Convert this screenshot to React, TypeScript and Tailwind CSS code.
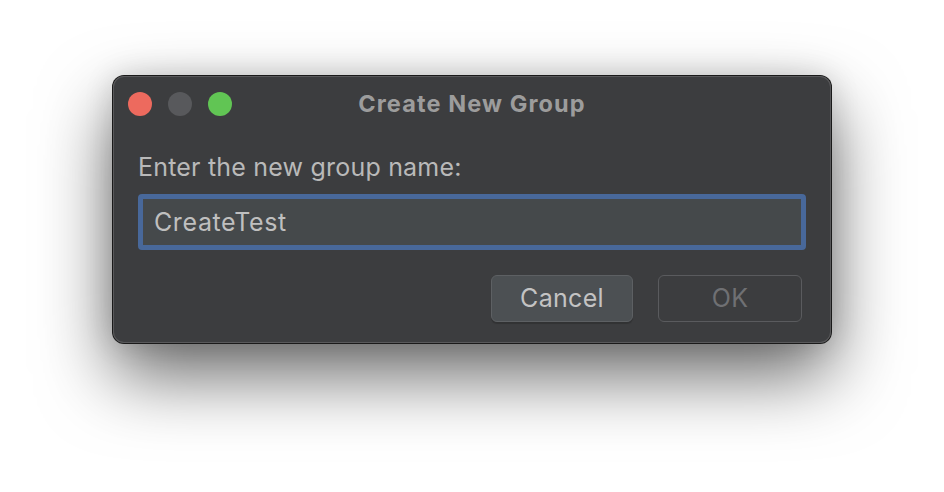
export default function App() {
  return (
    <div className="w-[944px] h-[492px] bg-white pt-[76px] pl-[113px] font-['Inter',sans-serif] overflow-hidden">
      <div className="w-[718px] h-[267px] rounded-[11px] bg-[#3c3d3f] flex flex-col shadow-[inset_0_0_0_1px_#59595b,0_0_0_1px_#1a1a1a,0_32px_72px_rgba(0,0,0,0.6),0_0_30px_rgba(0,0,0,0.14)]">
        <div className="h-[56px] shrink-0 grid grid-cols-[1fr_auto_1fr] items-center">
          <div className="flex items-center gap-[16px] pl-[15px]">
            <span className="w-[24px] h-[24px] rounded-full bg-[#ed6a5e]" />
            <span className="w-[24px] h-[24px] rounded-full bg-[#58595c]" />
            <span className="w-[24px] h-[24px] rounded-full bg-[#61c554]" />
          </div>
          <div className="text-[23.5px] font-bold tracking-[1.1px] text-[#9c9c9c] leading-[28px]">Create New Group</div>
          <div />
        </div>
        <div className="px-[25px] flex flex-col">
          <div className="mt-[21px] text-[25px] tracking-[0.2px] leading-[28px] text-[#b9b9b9]">Enter the new group name:</div>
          <div className="mt-[13px] h-[56px] rounded-[4px] border-[5px] border-[#48689a] bg-[#45494b] flex items-center pl-[11px] text-[25px] tracking-[0.6px] leading-[28px] text-[#bfbfbf]">
            CreateTest
          </div>
          <div className="mt-[25px] flex justify-end gap-[25px] pr-[4px]">
            <div className="w-[142px] h-[47px] rounded-[6px] bg-[#4c5053] border border-[#5d6063] shadow-[0_2px_1px_rgba(0,0,0,0.18)] flex items-center justify-center text-[25px] tracking-[0.3px] text-[#c3c3c3]">
              Cancel
            </div>
            <div className="w-[144px] h-[47px] rounded-[6px] border border-[#5a5b5e] flex items-center justify-center text-[25px] tracking-[0.3px] text-[#6f7073]">
              OK
            </div>
          </div>
        </div>
      </div>
    </div>
  );
}
